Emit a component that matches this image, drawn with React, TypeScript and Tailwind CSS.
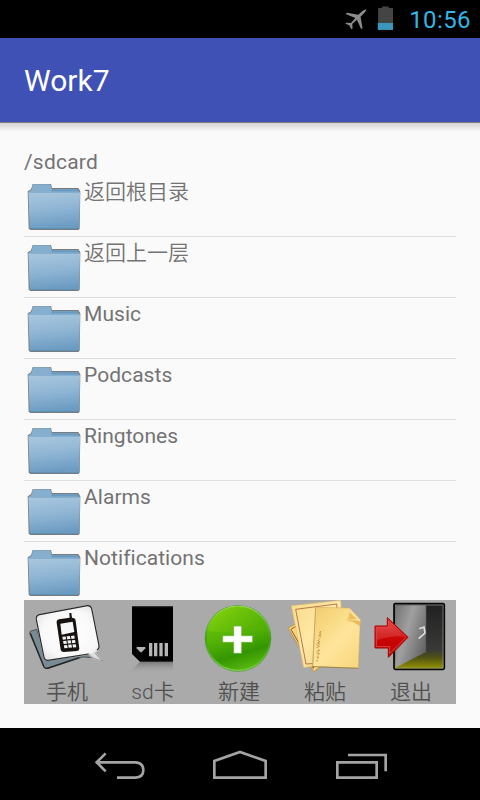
import React from "react";

const FONT = "font-['Roboto','Noto_Sans_CJK_SC',sans-serif]";

const entries = [
  { name: "返回根目录", cjk: true },
  { name: "返回上一层", cjk: true },
  { name: "Music" },
  { name: "Podcasts" },
  { name: "Ringtones" },
  { name: "Alarms" },
  { name: "Notifications" },
];

function FolderIcon() {
  return (
    <svg viewBox="24 108 180 180" className="h-[60px] w-[60px] shrink-0">
      <defs>
        <linearGradient id="folderFront" x1="0.2" y1="0" x2="0.35" y2="1">
          <stop offset="0" stopColor="#a9c7de" />
          <stop offset="0.5" stopColor="#8fb5d4" />
          <stop offset="1" stopColor="#6b9bc1" />
        </linearGradient>
        <filter id="folderShadow" x="-10%" y="-10%" width="120%" height="120%">
          <feGaussianBlur stdDeviation="1.8" />
        </filter>
      </defs>
      <path d="M35 154 L45 148 L50 132 H105 L108 144 H187 L193 154 L191 266 L187 270 H43 L38 266 Z" fill="#666" opacity="0.85" filter="url(#folderShadow)" />
      <path d="M38 155 L47 149 L50 136 Q51 133 54 133 H101 Q104 133 105 138 L107 147 H184 Q188 148 188 158 H38 Z" fill="#85aecf" />
      <path d="M107 148 H184 L188 155 H106 Z" fill="#689abf" />
      <path d="M37 158 Q37 155 41 155 H188 Q192 155 192 159 L190 263 Q190 267 186 267 H45 Q41 267 41 263 Z" fill="url(#folderFront)" />
      <path d="M39 156.500 H190" stroke="#75a4c8" strokeWidth="3" />
      <path d="M42 266 H188" stroke="#5485aa" strokeWidth="2" />
    </svg>
  );
}

const actionIcon = "block h-[76px] w-[86px] shrink-0";

function PhoneIcon() {
  return (
    <svg viewBox="24 180 258 228" className={actionIcon}>
      <defs>
        <radialGradient id="bubble" cx="0.5" cy="0.5" r="0.7">
          <stop offset="0" stopColor="#fff" />
          <stop offset="0.6" stopColor="#f8f8f8" />
          <stop offset="1" stopColor="#d5d5d5" />
        </radialGradient>
      </defs>
      <path d="M43 274 Q39 279 44 287 L83 380 Q88 388 97 385 L200 351 L232 353 L205 320 L90 350 L62 268 Z" fill="#788b95" stroke="#333" strokeWidth="2" />
      <path d="M43 280 L84 381 Q88 387 97 384 L190 353" fill="none" stroke="#222" strokeWidth="4" />
      <path d="M70 224 L214 197 Q224 196 227 206 L249 316 Q251 327 241 333 L237 337 Q246 354 262 362 Q231 359 218 342 L96 361 Q87 362 84 352 L61 239 Q59 227 70 224 Z" fill="url(#bubble)" stroke="#ddd" strokeWidth="4" />
      <path d="M218 342 L96 361 Q87 362 84 352 L61 239 Q59 227 70 224 L214 197 Q224 196 227 206 L249 316 Q251 325 243 330" fill="none" stroke="#292929" strokeWidth="3.500" />
      <path d="M237 338 Q246 354 262 362 Q231 359 218 342" fill="#ddd" stroke="#555" strokeWidth="1.500" />
      <path d="M160 219 L166 219 L168 233 L174 235 Q179 236 179 243 L190 326 Q190 332 183 333 L143 336 Q136 336 134 329 L122 248 Q121 240 129 238 L161 233 Z" fill="#17120f" />
      <path d="M133 251 L170 245 L175 276 L137 284 Z" fill="#f7f7f7" />
      <g fill="#f3f3f3" transform="translate(139 290) rotate(-5) skewX(5)">
        <rect width="10" height="9" /><rect x="13" width="10" height="9" /><rect x="26" width="10" height="9" />
        <rect y="13" width="10" height="9" /><rect x="13" y="13" width="10" height="9" /><rect x="26" y="13" width="10" height="9" />
        <rect y="26" width="10" height="9" /><rect x="13" y="26" width="10" height="9" /><rect x="26" y="26" width="10" height="9" />
      </g>
    </svg>
  );
}

function SdIcon() {
  return (
    <svg viewBox="0 15 258 228" className={actionIcon}>
      <defs>
        <linearGradient id="sdReflection" x1="0" y1="0" x2="0" y2="1">
          <stop offset="0" stopColor="#777" />
          <stop offset="1" stopColor="#aaa" stopOpacity="0" />
        </linearGradient>
      </defs>
      <path d="M90 200 H189 V235 H66 V224 Z" fill="url(#sdReflection)" />
      <path d="M66 34 H189 V200 H90 L66 177 Z" fill="#000" />
      <path d="M66 35 H189" stroke="#333" strokeWidth="3" />
      <path d="M90 199 H189" stroke="#333" strokeWidth="2" />
      <path d="M80 156 H106 V160 L95 172 H91 L80 160 Z" fill="#b2b2b2" />
      <path d="M122 144 V184 M137 144 V184 M153 144 V184 M169 144 V184" stroke="#b5b5b5" strokeWidth="10" />
    </svg>
  );
}

function AddIcon() {
  return (
    <svg viewBox="3 15 258 228" className={actionIcon}>
      <defs>
        <linearGradient id="greenDisc" x1="0.3" y1="0" x2="0.6" y2="1">
          <stop offset="0" stopColor="#78c80a" />
          <stop offset="0.45" stopColor="#55b306" />
          <stop offset="0.75" stopColor="#349600" />
          <stop offset="1" stopColor="#59b812" />
        </linearGradient>
        <linearGradient id="greenGloss" x1="0" y1="0" x2="1" y2="0.5">
          <stop offset="0" stopColor="#8dd80e" />
          <stop offset="1" stopColor="#51b006" />
        </linearGradient>
        <linearGradient id="greenRim" x1="0" y1="0" x2="0" y2="1">
          <stop offset="0" stopColor="#b2e884" />
          <stop offset="0.5" stopColor="#3a9d0b" />
          <stop offset="1" stopColor="#79ce41" />
        </linearGradient>
      </defs>
      <circle cx="129" cy="130" r="100" fill="#5d9e43" />
      <circle cx="129" cy="130" r="96" fill="url(#greenDisc)" stroke="url(#greenRim)" strokeWidth="4" />
      <path d="M36 106 A95 95 0 0 1 221 107 Q175 93 133 104 Q82 119 36 106 Z" fill="url(#greenGloss)" opacity="0.75" />
      <path d="M116 93 H140 V122 H173 V142 H140 V175 H116 V142 H83 V122 H116 Z" fill="#fff" stroke="#66ad28" strokeWidth="2" />
    </svg>
  );
}

function PasteIcon() {
  return (
    <svg viewBox="6 15 258 228" className={actionIcon}>
      <defs>
        <linearGradient id="paper" x1="0" y1="0" x2="1" y2="1">
          <stop offset="0" stopColor="#fadc89" />
          <stop offset="0.45" stopColor="#ffe8a5" />
          <stop offset="1" stopColor="#eecb72" />
        </linearGradient>
        <linearGradient id="paperFront" x1="0" y1="0" x2="0.8" y2="1">
          <stop offset="0" stopColor="#f0cb70" />
          <stop offset="0.3" stopColor="#f8d982" />
          <stop offset="0.6" stopColor="#ffe59c" />
          <stop offset="1" stopColor="#f9d880" />
        </linearGradient>
        <linearGradient id="paperFold" x1="0" y1="1" x2="0.8" y2="0">
          <stop offset="0" stopColor="#ffe6a0" />
          <stop offset="0.45" stopColor="#eec160" />
          <stop offset="1" stopColor="#c98f27" />
        </linearGradient>
      </defs>
      <path d="M25 99 L52 84 L125 212 L101 230 Z" fill="#f5d77e" stroke="#b2872c" strokeWidth="2" />
      <path d="M33 103 L47 94 L101 200 L100 220 Z" fill="none" stroke="#9c5327" strokeWidth="3" />
      <path d="M34 32 L182 16 L196 196 L71 218 Z" fill="url(#paper)" stroke="#dab564" strokeWidth="1.500" />
      <path d="M47 43 L170 27 L184 200 L78 207 Z" fill="none" stroke="#a8603f" strokeWidth="2.500" />
      <path d="M107 37 L208 39 L241 74 L235 219 L98 214 Z" fill="url(#paperFront)" stroke="#d0a952" strokeWidth="1.500" />
      <path d="M107 37 L98 214" stroke="#bfa668" strokeWidth="2.500" />
      <path d="M98 215 L235 220" stroke="#8e7434" strokeWidth="2" />
      <path d="M208 39 L241 74 L240 94 Q218 78 196 77 Q209 65 208 39 Z" fill="url(#paperFold)" />
      <path d="M208 39 L241 74 L240 80 Q218 71 199 77 Q209 62 208 39 Z" fill="#fbe09a" />
      <path d="M208 50 L230 73 Q215 70 202 75 Q210 65 208 50 Z" fill="#eebc5a" />
      <path d="M119 107 l4 4 l-5 3 l6 5 l-8 2 l7 6 m-8 2 l5 5 m-8 2 l8 4 l-7 4 l7 4 m-11 0 l9 6 l-8 4 m4 5 l5 4 l-9 2 m0 5 l8 1 l-5 6 m-3 4 l7 2 l-6 4 m-3 6 l7 1" fill="none" stroke="#b98b43" strokeWidth="2.500" />
    </svg>
  );
}

function ExitIcon() {
  return (
    <svg viewBox="9 15 258 228" className={actionIcon}>
      <defs>
        <linearGradient id="doorway" x1="0" y1="0" x2="0" y2="1">
          <stop offset="0" stopColor="#202020" />
          <stop offset="0.7" stopColor="#393937" />
          <stop offset="0.82" stopColor="#4f5214" />
          <stop offset="1" stopColor="#999900" />
        </linearGradient>
        <linearGradient id="doorPanel" x1="0" y1="0" x2="1" y2="0.6">
          <stop offset="0" stopColor="#757575" />
          <stop offset="0.45" stopColor="#a0a0a0" />
          <stop offset="1" stopColor="#666" />
        </linearGradient>
        <linearGradient id="redArrow" x1="0" y1="0" x2="0" y2="1">
          <stop offset="0" stopColor="#e83a3a" />
          <stop offset="0.5" stopColor="#cc0505" />
          <stop offset="1" stopColor="#b50000" />
        </linearGradient>
      </defs>
      <rect x="87" y="26" width="151" height="197" rx="4" fill="url(#doorway)" stroke="#080808" strokeWidth="5" />
      <rect x="91" y="30" width="143" height="189" fill="none" stroke="#999" strokeWidth="2" />
      <path d="M92 31 H184 V170 L92 218 Z" fill="url(#doorPanel)" />
      <path d="M184 31 V170" stroke="#303030" strokeWidth="2" />
      <path d="M163 101 L177 96 L180 114 L161 131" fill="none" stroke="#ddd" strokeWidth="5" />
      <path d="M30 93 H67 V68 L129 127 L70 187 V159 H30 Z" fill="url(#redArrow)" stroke="#a50000" strokeWidth="3" />
      <path d="M34 97 H71 V78 L123 127 L74 176 V155 H34 Z" fill="none" stroke="#e86565" strokeWidth="2" />
      <path d="M36 99 H73 V83 L117 125 Q90 120 36 135 Z" fill="#fff" opacity="0.13" />
    </svg>
  );
}

const actions = [
  { label: "手机", Icon: PhoneIcon },
  { label: "sd卡", Icon: SdIcon },
  { label: "新建", Icon: AddIcon },
  { label: "粘贴", Icon: PasteIcon },
  { label: "退出", Icon: ExitIcon },
];

function StatusBar() {
  return (
    <header className="flex h-[38px] items-center justify-end bg-black pr-[9px]">
      <svg viewBox="70 0 160 114" className="h-[38px] w-[53px]">
        <path d="M138 29 Q132 27 124 34 L113 44 L79 38 L75 42 L104 54 L91 69 L77 68 L74 71 L86 76 L92 88 L96 85 L95 72 L109 59 L122 88 L126 84 L120 50 L132 38 Z" fill="#8c8c8c" />
        <path d="M173 24 H185 V19 H205 V24 H218 V69 H173 Z" fill="#444" />
        <rect x="172" y="69" width="46" height="21" fill="#3b98bd" />
      </svg>
      <span className="ml-[12px] pt-[2px] text-[24px] leading-[38px] tracking-[0.4px] text-[#33b5e5]">10:56</span>
    </header>
  );
}

function NavigationBar() {
  const nav = "h-[72px] w-[120px]";
  return (
    <nav className="flex h-[72px] justify-center bg-black">
      <svg viewBox="-60 -21 360 216" className={nav} fill="none" stroke="#a4a4a4" strokeWidth="8">
        <path d="M48 82 H166 Q190 84 190 105 Q190 127 166 128 H111" />
        <path d="M77 55 L50 82 L77 109" />
      </svg>
      <svg viewBox="300 -21 360 216" className={nav} fill="none" stroke="#a4a4a4" strokeWidth="8">
        <path d="M403 128 V78 L480 51 L557 78 V128 Z" />
      </svg>
      <svg viewBox="660 -21 360 216" className={nav} fill="none" stroke="#a4a4a4" strokeWidth="8">
        <path d="M772 82 H890 V128 H772 Z M804 60 H917 V109" />
      </svg>
    </nav>
  );
}

export default function App() {
  return (
    <div className={`flex h-[800px] w-[480px] flex-col overflow-hidden bg-[#fafafa] text-[#737373] ${FONT}`}>
      <StatusBar />
      <div className="flex h-[84px] shrink-0 items-center bg-[#3f51b5] px-6 pt-[2px]">
        <h1 className="text-[30px] leading-9 text-white">Work7</h1>
      </div>
      <div className="h-[10px] shrink-0 border-t border-[#808080] bg-linear-to-b from-[#d4d4d4] to-[#fafafa]" />
      <main className="flex min-h-0 flex-1 flex-col px-6 pt-[16px] pb-6">
        <div className="h-[28px] shrink-0 text-[21px] leading-[28px] tracking-[0.2px]">/sdcard</div>
        <ul className="h-[424px] shrink-0 divide-y divide-[#dedede] overflow-hidden">
          {entries.map((e) => (
            <li key={e.name} className="flex h-[61px] items-start">
              <FolderIcon />
              <span className={e.cjk ? "text-[21px] font-[350] leading-[33px] text-[#737373]" : "text-[21px] leading-[33px] tracking-[0.05px]"}>{e.name}</span>
            </li>
          ))}
        </ul>
        <div className="flex h-[104px] shrink-0 bg-[#aaaaaa]">
          {actions.map(({ label, Icon }) => (
            <div key={label} className="flex w-[86px] flex-col items-center text-[#505050]">
              <Icon />
              <span className="shrink-0 pt-[2px] text-[21px] font-[350] leading-[28px]">{label}</span>
            </div>
          ))}
        </div>
      </main>
      <NavigationBar />
    </div>
  );
}
